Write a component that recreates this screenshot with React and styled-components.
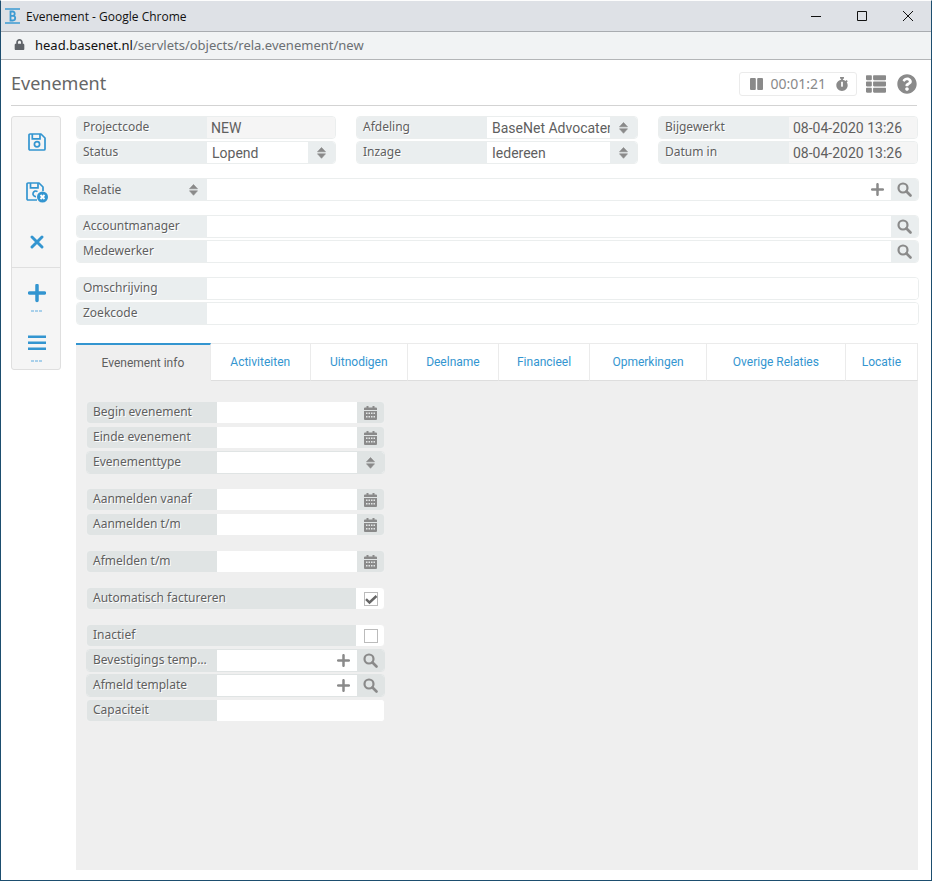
import React, { useState } from "react";
import styled, { createGlobalStyle, css } from "styled-components";
import { FaQuestionCircle, FaStopwatch, FaThList, FaLock } from "react-icons/fa";

const GlobalStyle = createGlobalStyle`
  * { box-sizing: border-box; }
  html, body, #root { height: 100%; }
  body { margin: 0; background: #fff; }
  body, button, input, select {
    font-family: "Noto Sans", "Open Sans", sans-serif;
    color: #5f5f5f;
  }
  button, input, select { border: 0; margin: 0; padding: 0; background: none; border-radius: 0; }
  button { cursor: pointer; }
`;

const blue = "#3395d0";
const grey = "#8a8a8a";

const Window = styled.div`
  display: flex;
  flex-direction: column;
  min-height: 100%;
  border: 1px solid #1d4e6f;
  border-top-color: #fdfdfd;
`;

const TitleBar = styled.header`
  display: flex;
  align-items: center;
  height: 31px;
  padding-left: 4px;
  background: #dee1e6;
  border-bottom: 1px solid #a9acb0;
  color: #111;
  font-size: 12px;
`;

const WindowTitle = styled.span`
  flex: 1;
  padding-left: 5px;
  font-family: "Open Sans", "Noto Sans", sans-serif;
`;

const WindowButton = styled.button`
  display: grid;
  place-items: center;
  width: 46px;
  height: 28px;
`;

const AddressBar = styled.div`
  display: flex;
  align-items: center;
  gap: 10px;
  height: 28px;
  padding: 0 0 2px 13px;
  background: #f1f3f4;
  border-bottom: 1px solid #b3b5b7;
  color: #5f6368;
  font-size: 13px;
`;

const Address = styled.span`
  color: #6b6f73;
  b { font-weight: 400; color: #111; }
`;

const PageHeader = styled.div`
  display: flex;
  align-items: center;
  height: 46px;
  padding-top: 2px;
  margin: 0 14px 0 10px;
  border-bottom: 1px solid #d3d3d3;
  color: ${grey};
`;

const PageTitle = styled.h1`
  flex: 1;
  margin: 0;
  padding-bottom: 2px;
  font-size: 18px;
  font-weight: 400;
  color: #666;
`;

const Timer = styled.div`
  display: flex;
  align-items: center;
  height: 24px;
  padding: 0 7px 0 10px;
  margin-right: 9px;
  border: 1px solid #ebebeb;
  border-radius: 3px;
  font-size: 14px;
  time { padding: 0 9px 0 7px; }
`;

const IconButton = styled.button`
  display: grid;
  place-items: center;
  color: inherit;
  & + & { margin-left: 11px; }
`;

const Body = styled.div`
  flex: 1;
  display: flex;
  align-items: flex-start;
  gap: 15px;
  padding: 10px 12px 10px 10px;
`;

const Sidebar = styled.nav`
  flex: none;
  width: 50px;
  background: #f5f5f5;
  border: 1px solid #dfdfdf;
  border-radius: 3px;
`;

const ToolGroup = styled.div`
  & + & { border-top: 1px solid #dfdfdf; padding-top: 1px; }
`;

const Tool = styled.button`
  display: grid;
  place-items: center;
  width: 100%;
  height: 50px;
  padding: ${(p) => (p.$menu ? "8px" : "0")} 0 0 2px;
  color: ${blue};
`;

const Main = styled.main`
  flex: 1;
  min-width: 0;
  align-self: stretch;
  display: flex;
  flex-direction: column;
  gap: 14px;
`;

const Columns = styled.div`
  display: grid;
  grid-template-columns: minmax(0, 260fr) minmax(0, 282fr) minmax(0, 260fr);
  gap: 20px;
  margin-right: 1px;
`;

const Group = styled.div`
  display: flex;
  flex-direction: column;
  gap: 2px;
`;

const Row = styled.div`
  display: flex;
  height: 23px;
  border: 1px solid ${(p) => (p.$dark ? (p.$edge ? "#e0e4e4" : "#efefef") : "#ebeeee")};
  border-radius: 4px;
  overflow: hidden;
  background: #fff;
`;

const labelTone = css`
  background: ${(p) => (p.$dark ? "#e0e4e4" : "#eaeeef")};
`;

const Label = styled.label`
  ${labelTone}
  flex: ${(p) => (p.$wide ? "1" : "none")};
  width: 130px;
  padding: 0 8px 0 6px;
  font-size: 12px;
  line-height: 20px;
  text-shadow: 1px 1px 0 #fff;
  white-space: nowrap;
  overflow: hidden;
  text-overflow: ellipsis;
`;

const TextInput = styled.input`
  flex: 1;
  min-width: 0;
  padding: 1px 4px 0;
  font-family: Roboto, "Noto Sans", sans-serif;
  font-size: 14px;
  outline: none;
  background: ${(p) => (p.readOnly ? "#f5f5f5" : "#fff")};
`;

const Picker = styled.div`
  flex: ${(p) => (p.$asLabel ? "none" : "1")};
  width: ${(p) => (p.$asLabel ? "130px" : "auto")};
  min-width: 0;
  display: grid;
  grid-template-columns: minmax(0, 1fr) 27px;
  ${(p) => p.$asLabel && labelTone}
  > * { grid-row: 1; }
`;

const Select = styled.select`
  grid-column: 1 / -1;
  min-width: 0;
  appearance: none;
  padding: 1px 0 0 ${(p) => (p.$asLabel ? "6px" : "5px")};
  font-family: ${(p) => (p.$asLabel ? "inherit" : 'Roboto, "Noto Sans", sans-serif')};
  font-size: ${(p) => (p.$asLabel ? "12px" : "14px")};
  line-height: 20px;
  outline: none;
  background: ${(p) => (p.$asLabel ? "transparent" : "#fff")};
`;

const PickerArrow = styled.span`
  ${labelTone}
  grid-column: 2;
  display: grid;
  place-items: center;
  pointer-events: none;
  color: ${grey};
`;

const EndButton = styled.button`
  ${labelTone}
  flex: none;
  display: grid;
  place-items: center;
  width: 27px;
  color: ${grey};
`;

const AddButton = styled.button`
  flex: none;
  display: grid;
  place-items: center;
  width: 27px;
  background: #fff;
  color: ${grey};
`;

const CheckCell = styled.div`
  flex: none;
  display: grid;
  place-items: center;
  width: 28px;
  padding: 1px 0 0 1px;
  > * { grid-area: 1 / 1; }
  svg { pointer-events: none; visibility: hidden; color: #666; }
  input:checked + svg { visibility: visible; }
`;

const Checkbox = styled.input`
  appearance: none;
  width: 14px;
  height: 14px;
  border: 1px solid #bbb;
  background: #fff;
`;

const TabSection = styled.section`
  flex: 1;
  display: flex;
  flex-direction: column;
  margin-top: 4px;
  margin-right: 1px;
`;

const TabList = styled.div`
  display: flex;
  height: 38px;
`;

const Tab = styled.button`
  flex: ${(p) => p.$share} 1 0;
  min-width: 0;
  font-family: Roboto, "Noto Sans", sans-serif;
  font-size: 12px;
  white-space: nowrap;
  color: ${blue};
  background: #fff;
  border-top: 1px solid #ebebeb;
  border-right: 1px solid #ebebeb;
  border-bottom: 1px solid #dedede;
  ${(p) =>
    p["aria-selected"] &&
    css`
      color: #5f5f5f;
      background: #efefef;
      border-top: 2px solid ${blue};
      border-bottom-color: #efefef;
    `}
`;

const Panel = styled.div`
  flex: 1;
  padding: 20px 10px;
  background: #efefef;
`;

const PanelForm = styled.div`
  display: flex;
  flex-direction: column;
  gap: 14px;
  width: 299px;
`;

const SortIcon = () => (
  <svg width="9" height="12" viewBox="0 0 9 12" fill="currentColor" aria-hidden="true">
    <path d="M4.500.5 8.500 4.800H.5zM.5 6.800h8L4.500 11.300z" stroke="currentColor" strokeWidth=".6" strokeLinejoin="round" />
  </svg>
);

const SearchIcon = () => (
  <svg width="15" height="15" viewBox="0 0 15 15" fill="none" stroke="currentColor" aria-hidden="true">
    <circle cx="6" cy="6" r="4.500" strokeWidth="2.200" />
    <path d="m9.500 9.500 4 4" strokeWidth="2.600" strokeLinecap="round" />
  </svg>
);

const PlusIcon = () => (
  <svg width="13" height="13" viewBox="0 0 13 13" fill="none" stroke="currentColor" aria-hidden="true">
    <path d="M6.500 1.200v10.600M1.200 6.500h10.600" strokeWidth="2.500" strokeLinecap="round" />
  </svg>
);

const CalendarIcon = () => (
  <svg width="13" height="14" viewBox="0 0 13 14" aria-hidden="true">
    <path fill="currentColor" d="M2.500 0h2v1.500h4V0h2v1.500H12a1 1 0 0 1 1 1V4H0V2.500a1 1 0 0 1 1-1h1.500zM0 5h13v8a1 1 0 0 1-1 1H1a1 1 0 0 1-1-1z" />
    <path fill="#e4e7e7" d="M2 6.500h1.500V8H2zm2.500 0H6V8H4.500zm2.500 0h1.500V8H7zm2.500 0H11V8H9.500zM2 10h1.500v1.500H2zm2.500 0H6v1.500H4.500zM7 10h1.500v1.500H7zm2.500 0H11v1.500H9.500z" />
  </svg>
);

const CheckIcon = () => (
  <svg width="14" height="14" viewBox="0 0 14 14" fill="none" stroke="currentColor" aria-hidden="true">
    <path d="m2 7.200 3.500 3.300L12.500 4" strokeWidth="2.400" />
  </svg>
);

const SaveIcon = () => (
  <svg width="18" height="18" viewBox="0 0 18 18" fill="none" stroke="currentColor" strokeWidth="1.700" aria-hidden="true">
    <path d="M2 1h11l4 4v11a1 1 0 0 1-1 1H2a1 1 0 0 1-1-1V2a1 1 0 0 1 1-1z" strokeLinejoin="round" />
    <path d="M4.300 1v4.800h7.700V1" />
    <circle cx="9" cy="11.300" r="2.600" />
  </svg>
);

const SaveCloseIcon = () => (
  <svg width="23" height="21" viewBox="0 0 23 21" fill="none" stroke="currentColor" strokeWidth="1.700" aria-hidden="true">
    <path d="M11 18H2a1 1 0 0 1-1-1V2a1 1 0 0 1 1-1h11l4 4v4" strokeLinejoin="round" />
    <path d="M4.500 1v4.800h7.500V1M11.500 9.600a2.800 2.800 0 1 0-1.500 5" />
    <circle cx="16.500" cy="15" r="5.500" fill="currentColor" stroke="none" />
    <path d="m14.500 13 4 4m0-4-4 4" stroke="#fff" strokeWidth="1.800" />
  </svg>
);

const CrossIcon = () => (
  <svg width="14" height="14" viewBox="0 0 14 14" fill="none" stroke="currentColor" aria-hidden="true">
    <path d="m2 2 10 10m0-10L2 12" strokeWidth="2.900" strokeLinecap="round" />
  </svg>
);

const Dots = () => (
  <path fill="#a9d0ea" d="M3 26h3v2H3zm4 0h3v2H7zm4 0h3v2h-3z" />
);

const AddMenuIcon = () => (
  <svg width="18" height="28" viewBox="0 0 18 28" aria-hidden="true">
    <path d="M9 1.500v15M1.500 9h15" stroke="currentColor" strokeWidth="3.500" strokeLinecap="round" />
    <Dots />
  </svg>
);

const ListMenuIcon = () => (
  <svg width="18" height="28" viewBox="0 0 18 28" aria-hidden="true">
    <path fill="currentColor" d="M0 1.500h18V4H0zm0 6h18V10H0zm0 6h18V16H0z" />
    <Dots />
  </svg>
);

const Favicon = () => (
  <svg width="16" height="16" viewBox="0 0 16 16" fill="none" stroke="#3c9ad2" aria-hidden="true">
    <path d="M0 1h15M0 15h15" strokeWidth="1.600" />
    <path d="M5.500 3.500v9h2.300q2.400 0 2.400-2.400T7.800 7.900H5.500h2q2.200 0 2.200-2.200T7.500 3.500z" strokeWidth="1.800" />
  </svg>
);

const PauseIcon = () => (
  <svg width="13" height="12" viewBox="0 0 13 12" fill="currentColor" aria-hidden="true">
    <rect width="5.800" height="12" rx="1" />
    <rect x="7.200" width="5.800" height="12" rx="1" />
  </svg>
);

function TextField({ id, label, dark, edge, value, add, end, readOnly }) {
  return (
    <Row $dark={dark} $edge={edge}>
      <Label htmlFor={id} $dark={dark}>{label}</Label>
      <TextInput id={id} defaultValue={value} readOnly={readOnly} />
      {add && <AddButton type="button" aria-label={`${label} toevoegen`}><PlusIcon /></AddButton>}
      {end === "search" && (
        <EndButton type="button" $dark={dark} aria-label={`${label} zoeken`}><SearchIcon /></EndButton>
      )}
      {end === "date" && (
        <EndButton type="button" $dark={dark} aria-label={`${label} kiezen`}><CalendarIcon /></EndButton>
      )}
    </Row>
  );
}

function SelectField({ id, label, dark, value }) {
  return (
    <Row $dark={dark} $edge>
      <Label htmlFor={id} $dark={dark}>{label}</Label>
      <Picker>
        <Select id={id}><option>{value}</option></Select>
        <PickerArrow $dark={dark}><SortIcon /></PickerArrow>
      </Picker>
    </Row>
  );
}

function CheckField({ id, label, checked }) {
  return (
    <Row $dark>
      <Label htmlFor={id} $dark $wide>{label}</Label>
      <CheckCell>
        <Checkbox id={id} type="checkbox" defaultChecked={checked} />
        <CheckIcon />
      </CheckCell>
    </Row>
  );
}

const tabs = [
  ["Evenement info", 135],
  ["Activiteiten", 100],
  ["Uitnodigen", 97],
  ["Deelname", 91],
  ["Financieel", 91],
  ["Opmerkingen", 117],
  ["Overige Relaties", 139],
  ["Locatie", 72],
];

export default function App() {
  const [active, setActive] = useState(0);
  return (
    <>
      <GlobalStyle />
      <Window>
        <TitleBar>
          <Favicon />
          <WindowTitle>Evenement - Google Chrome</WindowTitle>
          <WindowButton aria-label="Minimaliseren">
            <svg width="10" height="10" stroke="#111"><path d="M0 5.500h10" /></svg>
          </WindowButton>
          <WindowButton aria-label="Maximaliseren">
            <svg width="10" height="10" fill="none" stroke="#111"><path d="M.5.5h9v9h-9z" /></svg>
          </WindowButton>
          <WindowButton aria-label="Sluiten">
            <svg width="10" height="10" stroke="#111"><path d="m0 0 10 10M10 0 0 10" /></svg>
          </WindowButton>
        </TitleBar>
        <AddressBar>
          <FaLock size={11} />
          <Address><b>head.basenet.nl</b>/servlets/objects/rela.evenement/new</Address>
        </AddressBar>
        <PageHeader>
          <PageTitle>Evenement</PageTitle>
          <Timer>
            <IconButton aria-label="Pauzeren"><PauseIcon /></IconButton>
            <time>00:01:21</time>
            <IconButton aria-label="Tijd schrijven"><FaStopwatch size={14} /></IconButton>
          </Timer>
          <IconButton aria-label="Lijst"><FaThList size={20} /></IconButton>
          <IconButton aria-label="Help"><FaQuestionCircle size={20} /></IconButton>
        </PageHeader>
        <Body>
          <Sidebar>
            <ToolGroup>
              <Tool aria-label="Opslaan"><SaveIcon /></Tool>
              <Tool aria-label="Opslaan en sluiten"><SaveCloseIcon /></Tool>
              <Tool aria-label="Sluiten"><CrossIcon /></Tool>
            </ToolGroup>
            <ToolGroup>
              <Tool $menu aria-label="Nieuw"><AddMenuIcon /></Tool>
              <Tool $menu aria-label="Menu"><ListMenuIcon /></Tool>
            </ToolGroup>
          </Sidebar>
          <Main>
            <Columns>
              <Group>
                <TextField id="projectcode" label="Projectcode" value="NEW" readOnly />
                <SelectField id="status" label="Status" value="Lopend" />
              </Group>
              <Group>
                <SelectField id="afdeling" label="Afdeling" value="BaseNet Advocaten" />
                <SelectField id="inzage" label="Inzage" value="Iedereen" />
              </Group>
              <Group>
                <TextField id="bijgewerkt" label="Bijgewerkt" value="08-04-2020 13:26" readOnly />
                <TextField id="datum" label="Datum in" value="08-04-2020 13:26" readOnly />
              </Group>
            </Columns>
            <Row>
              <Picker $asLabel>
                <Select $asLabel aria-label="Soort relatie"><option>Relatie</option></Select>
                <PickerArrow><SortIcon /></PickerArrow>
              </Picker>
              <TextInput aria-label="Relatie" />
              <AddButton type="button" aria-label="Relatie toevoegen"><PlusIcon /></AddButton>
              <EndButton type="button" aria-label="Relatie zoeken"><SearchIcon /></EndButton>
            </Row>
            <Group>
              <TextField id="accountmanager" label="Accountmanager" end="search" />
              <TextField id="medewerker" label="Medewerker" end="search" />
            </Group>
            <Group>
              <TextField id="omschrijving" label="Omschrijving" />
              <TextField id="zoekcode" label="Zoekcode" />
            </Group>
            <TabSection>
              <TabList role="tablist">
                {tabs.map(([name, share], i) => (
                  <Tab key={name} role="tab" $share={share} aria-selected={i === active} onClick={() => setActive(i)}>
                    {name}
                  </Tab>
                ))}
              </TabList>
              <Panel role="tabpanel">
                <PanelForm>
                  <Group>
                    <TextField dark id="begin" label="Begin evenement" end="date" />
                    <TextField dark id="einde" label="Einde evenement" end="date" />
                    <SelectField dark id="type" label="Evenementtype" value="" />
                  </Group>
                  <Group>
                    <TextField dark id="vanaf" label="Aanmelden vanaf" end="date" />
                    <TextField dark id="aanmelden" label="Aanmelden t/m" end="date" />
                  </Group>
                  <TextField dark id="afmelden" label="Afmelden t/m" end="date" />
                  <CheckField id="factureren" label="Automatisch factureren" checked />
                  <Group>
                    <CheckField id="inactief" label="Inactief" />
                    <TextField dark edge id="bevestiging" label="Bevestigings template" add end="search" />
                    <TextField dark edge id="afmeld" label="Afmeld template" add end="search" />
                    <TextField dark id="capaciteit" label="Capaciteit" />
                  </Group>
                </PanelForm>
              </Panel>
            </TabSection>
          </Main>
        </Body>
      </Window>
    </>
  );
}
